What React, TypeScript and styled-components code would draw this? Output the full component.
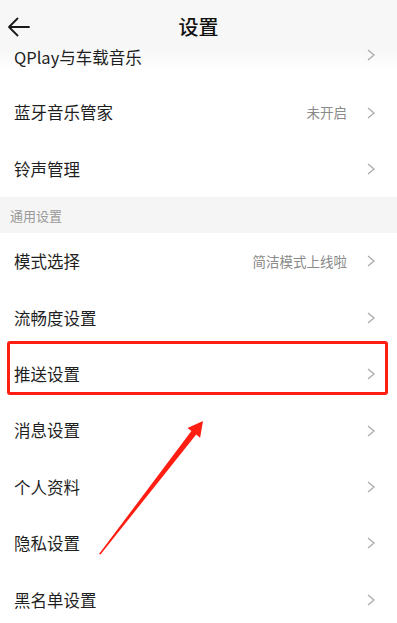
import styled, { createGlobalStyle } from 'styled-components'

const GlobalStyle = createGlobalStyle`
  html, body {
    margin: 0;
    padding: 0;
    background: #fff;
  }
  body {
    font-family: "Noto Sans CJK SC", "Noto Sans", sans-serif;
    color: #1f1f1f;
  }
`

const Page = styled.div`
  position: relative;
  width: 397px;
  height: 623px;
  overflow: hidden;
  background: #fff;
`

const Header = styled.header`
  position: relative;
  display: flex;
  align-items: center;
  justify-content: center;
  height: 48px;
  padding-top: 6px;
  box-sizing: border-box;
  background: #f7f7f7;
`

const BackButton = styled.button`
  position: absolute;
  left: 7px;
  top: 17px;
  display: flex;
  padding: 0;
  border: none;
  background: none;
`

const Title = styled.h1`
  margin: 0;
  font-size: 20px;
  font-weight: 500;
  line-height: 1;
  color: #111;
`

const Row = styled.div<{ $partial?: boolean }>`
  display: flex;
  align-items: ${(p) => (p.$partial ? 'flex-start' : 'center')};
  height: ${(p) => (p.$partial ? '36.5px' : '56.4px')};
  padding: ${(p) => (p.$partial ? '1px 22px 0 14px' : '0 22px 0 14px')};
  box-sizing: border-box;
  background: ${(p) =>
    p.$partial ? 'linear-gradient(#f7f7f7 0px, #fbfbfb 12px, #fff 24px)' : '#fff'};
`

const Label = styled.span`
  flex: 1;
  font-size: 16.5px;
  line-height: 1;
  color: #1f1f1f;
`

const Value = styled.span`
  margin-right: 20px;
  font-size: 13.5px;
  line-height: 1;
  color: #8a8a8a;
`

const SectionTitle = styled.div`
  display: flex;
  align-items: center;
  height: 36px;
  padding-left: 10px;
  font-size: 13px;
  color: #999;
  background: #f5f5f5;
`

const Highlight = styled.div`
  position: absolute;
  left: 7px;
  top: 341px;
  width: 381px;
  height: 54px;
  box-sizing: border-box;
  border: 3px solid #ff1e12;
  border-radius: 3px;
  pointer-events: none;
`

const Annotation = styled.svg`
  position: absolute;
  left: 0;
  top: 0;
  pointer-events: none;
`

const Chevron = () => (
  <svg width='8' height='12' viewBox='0 0 8 12'>
    <polyline points='1,1 7,6 1,11' fill='none' stroke='#ababab' strokeWidth='1.3' />
  </svg>
)

type Item = { label: string; value?: string }

const topItems: Item[] = [{ label: '蓝牙音乐管家', value: '未开启' }, { label: '铃声管理' }]

const generalItems: Item[] = [
  { label: '模式选择', value: '简洁模式上线啦' },
  { label: '流畅度设置' },
  { label: '推送设置' },
  { label: '消息设置' },
  { label: '个人资料' },
  { label: '隐私设置' },
  { label: '黑名单设置' },
]

const SettingRow = ({ label, value }: Item) => (
  <Row>
    <Label>{label}</Label>
    {value && <Value>{value}</Value>}
    <Chevron />
  </Row>
)

export default function App() {
  return (
    <>
      <GlobalStyle />
      <Page>
        <Header>
          <BackButton aria-label='返回'>
            <svg width='23' height='20' viewBox='0 0 23 20'>
              <path
                d='M22 10H2M10.5 1.5L2 10l8.5 8.5'
                fill='none'
                stroke='#1a1a1a'
                strokeWidth='1.8'
                strokeLinecap='round'
                strokeLinejoin='round'
              />
            </svg>
          </BackButton>
          <Title>设置</Title>
        </Header>

        <Row $partial>
          <Label>QPlay与车载音乐</Label>
          <Chevron />
        </Row>
        {topItems.map((item) => (
          <SettingRow key={item.label} {...item} />
        ))}

        <SectionTitle>通用设置</SectionTitle>
        {generalItems.map((item) => (
          <SettingRow key={item.label} {...item} />
        ))}

        <Highlight />
        <Annotation width='397' height='623' viewBox='0 0 397 623'>
          <polygon
            points='99,554 191.4,431 187.5,427.9 203,421 200.1,437.7 196.2,434.6 100.5,554.5'
            fill='#ff1e12'
          />
        </Annotation>
      </Page>
    </>
  )
}
